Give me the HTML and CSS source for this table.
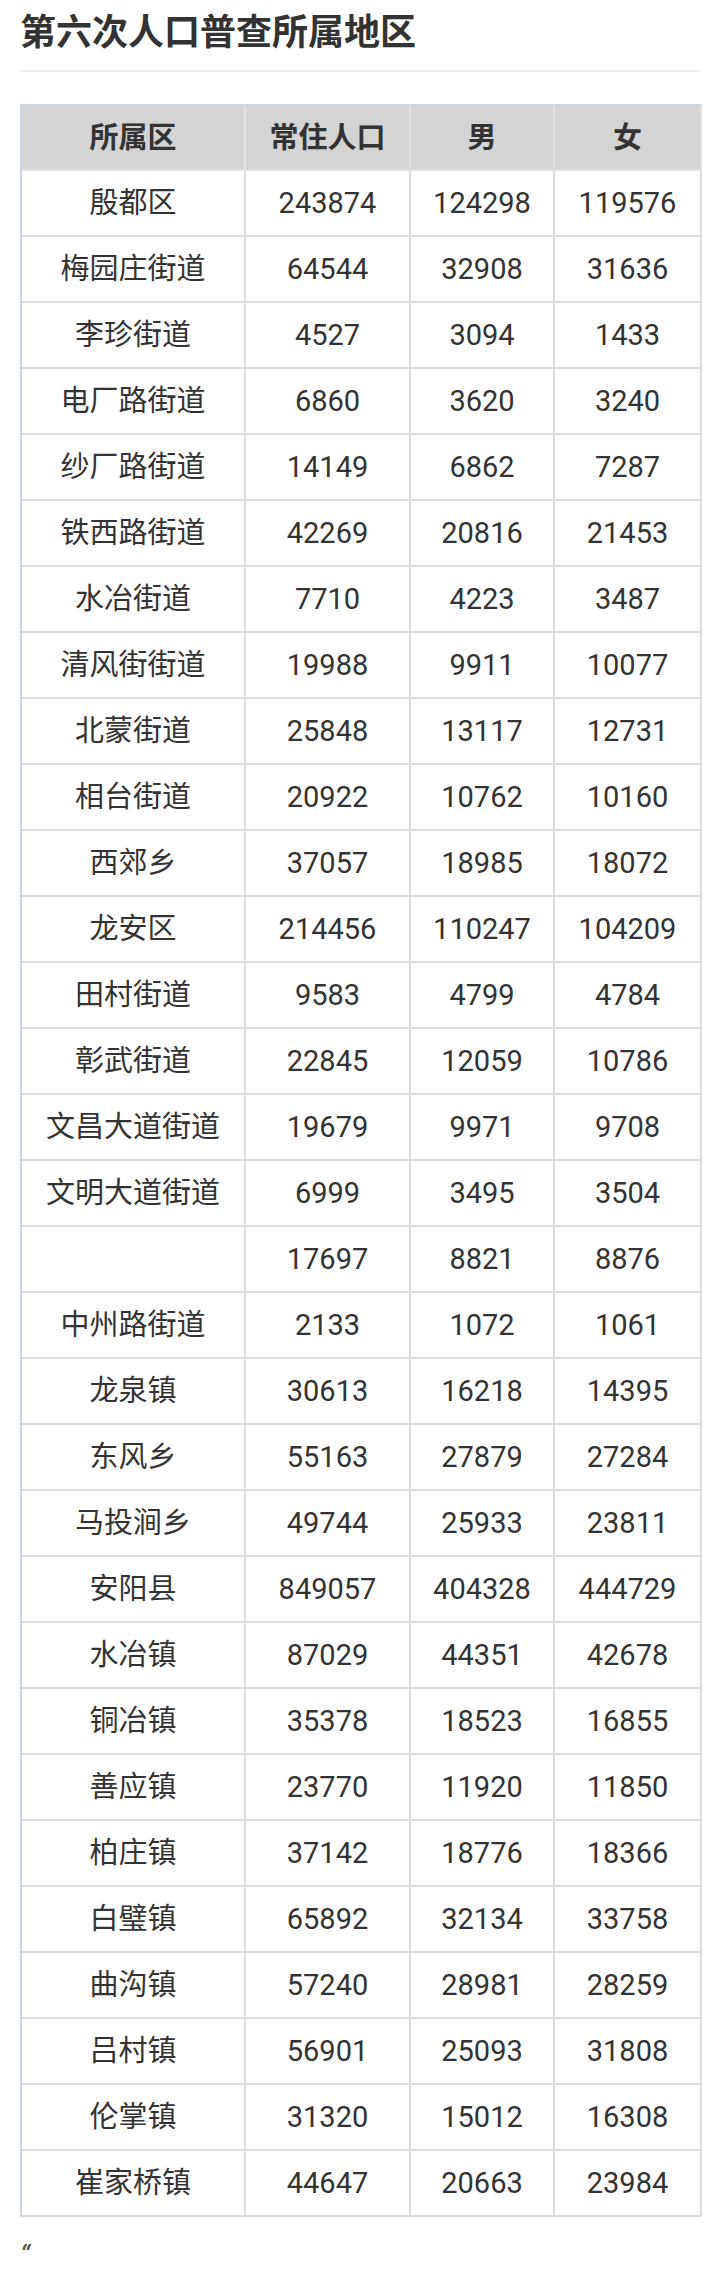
FILE: index.html
```html
<!DOCTYPE html>
<html lang="zh-CN">
<head>
<meta charset="utf-8">
<title>第六次人口普查所属地区</title>
<link rel="stylesheet" href="styles.css">
</head>
<body>
<div class="page">
  <h1 class="title">第六次人口普查所属地区</h1>
  <div class="rule"></div>
  <table class="census">
    <thead>
      <tr><th>所属区</th><th>常住人口</th><th>男</th><th>女</th></tr>
    </thead>
    <tbody>
      <tr><td>殷都区</td><td>243874</td><td>124298</td><td>119576</td></tr>
      <tr><td>梅园庄街道</td><td>64544</td><td>32908</td><td>31636</td></tr>
      <tr><td>李珍街道</td><td>4527</td><td>3094</td><td>1433</td></tr>
      <tr><td>电厂路街道</td><td>6860</td><td>3620</td><td>3240</td></tr>
      <tr><td>纱厂路街道</td><td>14149</td><td>6862</td><td>7287</td></tr>
      <tr><td>铁西路街道</td><td>42269</td><td>20816</td><td>21453</td></tr>
      <tr><td>水冶街道</td><td>7710</td><td>4223</td><td>3487</td></tr>
      <tr><td>清风街街道</td><td>19988</td><td>9911</td><td>10077</td></tr>
      <tr><td>北蒙街道</td><td>25848</td><td>13117</td><td>12731</td></tr>
      <tr><td>相台街道</td><td>20922</td><td>10762</td><td>10160</td></tr>
      <tr><td>西郊乡</td><td>37057</td><td>18985</td><td>18072</td></tr>
      <tr><td>龙安区</td><td>214456</td><td>110247</td><td>104209</td></tr>
      <tr><td>田村街道</td><td>9583</td><td>4799</td><td>4784</td></tr>
      <tr><td>彰武街道</td><td>22845</td><td>12059</td><td>10786</td></tr>
      <tr><td>文昌大道街道</td><td>19679</td><td>9971</td><td>9708</td></tr>
      <tr><td>文明大道街道</td><td>6999</td><td>3495</td><td>3504</td></tr>
      <tr><td></td><td>17697</td><td>8821</td><td>8876</td></tr>
      <tr><td>中州路街道</td><td>2133</td><td>1072</td><td>1061</td></tr>
      <tr><td>龙泉镇</td><td>30613</td><td>16218</td><td>14395</td></tr>
      <tr><td>东风乡</td><td>55163</td><td>27879</td><td>27284</td></tr>
      <tr><td>马投涧乡</td><td>49744</td><td>25933</td><td>23811</td></tr>
      <tr><td>安阳县</td><td>849057</td><td>404328</td><td>444729</td></tr>
      <tr><td>水冶镇</td><td>87029</td><td>44351</td><td>42678</td></tr>
      <tr><td>铜冶镇</td><td>35378</td><td>18523</td><td>16855</td></tr>
      <tr><td>善应镇</td><td>23770</td><td>11920</td><td>11850</td></tr>
      <tr><td>柏庄镇</td><td>37142</td><td>18776</td><td>18366</td></tr>
      <tr><td>白璧镇</td><td>65892</td><td>32134</td><td>33758</td></tr>
      <tr><td>曲沟镇</td><td>57240</td><td>28981</td><td>28259</td></tr>
      <tr><td>吕村镇</td><td>56901</td><td>25093</td><td>31808</td></tr>
      <tr><td>伦掌镇</td><td>31320</td><td>15012</td><td>16308</td></tr>
      <tr><td>崔家桥镇</td><td>44647</td><td>20663</td><td>23984</td></tr>
    </tbody>
  </table>
  <p class="tail">“</p>
</div>
</body>
</html>
```

FILE: styles.css
```css
html, body {
  margin: 0;
  padding: 0;
  background: #ffffff;
}

.page {
  padding: 0 20px 0 20px;
  font-family: Roboto, "Noto Sans CJK SC", sans-serif;
  color: #333333;
}

.title {
  margin: 0;
  padding-top: 4px;
  font-size: 36px;
  line-height: 50px;
  font-weight: bold;
  color: #333333;
  font-family: "Noto Sans CJK SC", sans-serif;
}

.rule {
  margin-top: 16px;
  height: 2px;
  background: #eeeeee;
}

.census {
  margin-top: 32px;
  width: 680px;
  table-layout: fixed;
  border-collapse: separate;
  border-spacing: 0;
  border-top: 2px solid #c9d5e1;
  border-left: 2px solid #c9d5e1;
}

.census th,
.census td {
  box-sizing: border-box;
  height: 66px;
  padding: 0;
  text-align: center;
  vertical-align: middle;
  border-right: 2px solid #dddddd;
  border-bottom: 2px solid #dddddd;
  font-size: 29px;
  line-height: 32px;
}

.census th:nth-child(1) { width: 224px; }
.census th:nth-child(2) { width: 165px; }
.census th:nth-child(3) { width: 144px; }
.census th:nth-child(4) { width: 147px; }

.census th {
  height: 65px;
  background: #d4d4d4;
  font-weight: bold;
  color: #333333;
  border-right-color: #e2e2e2;
  border-bottom-color: #e2e2e2;
}

.census td {
  color: #333333;
  font-weight: normal;
}

.tail {
  margin: 24px 0 0 0;
  font-size: 28px;
  line-height: 30px;
  font-style: italic;
  color: #555555;
}
```
